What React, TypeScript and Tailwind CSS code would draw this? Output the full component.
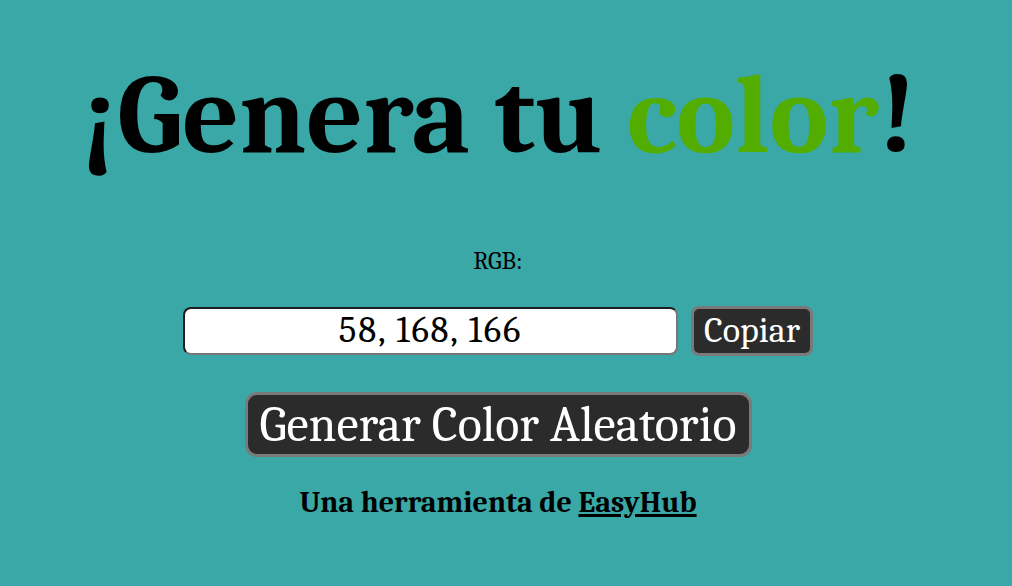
import React from "react"

const serif = "font-['Cambria','Caladea','Liberation_Serif',serif]"

export default function App() {
  const [rgb] = React.useState("58, 168, 166")

  return (
    <div className={`min-h-screen w-full bg-[#3aa8a6] text-black ${serif} pr-[16px] flex flex-col items-center`}>
      <h1 className="mt-[56px] text-[111px] leading-[120px] font-bold">
        ¡Genera tu <span className="text-[#52ad00]">color</span>!
      </h1>

      <p className="mt-[70px] text-[25px] leading-[30px]">RGB:</p>

      <div className="mt-[30px] flex items-center gap-[13px]">
        <input
          readOnly
          value={rgb}
          className={`w-[495px] h-[48px] rounded-[8px] border-2 border-[#777] border-t-[#1e1e1e] border-l-[#1e1e1e] bg-white text-center text-[37px] tracking-[1.8px] ${serif} outline-none`}
        />
        <button className="w-[122px] h-[50px] rounded-[8px] border-[3px] border-[#7a7a7a] bg-[#2b2b2b] text-white text-[36px] leading-none">
          Copiar
        </button>
      </div>

      <button className="mt-[36px] w-[507px] h-[65px] rounded-[12px] border-[3px] border-[#7a7a7a] bg-[#2b2b2b] text-white text-[50px] leading-none">
        Generar Color Aleatorio
      </button>

      <p className="mt-[28px] text-[30px] font-bold leading-[36px]">
        Una herramienta de <a href="#" className="underline text-black">EasyHub</a>
      </p>
    </div>
  )
}
